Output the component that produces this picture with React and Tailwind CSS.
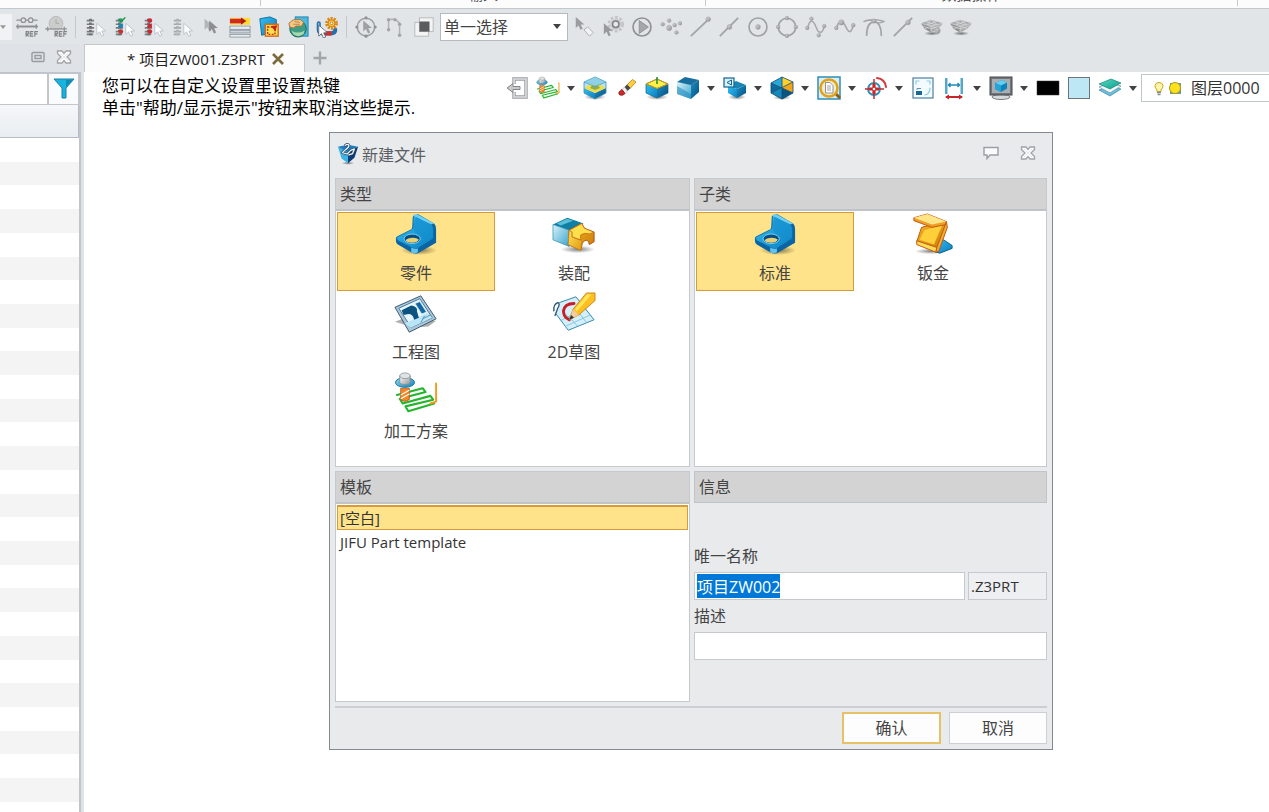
import React, { useEffect, useRef } from "react";

const stroke = { fill: "none", strokeLinecap: "round", strokeLinejoin: "round" };

function Svg({ children, size = "size-[22px]", box = 24 }) {
  return (
    <svg viewBox={`0 0 ${box} ${box}`} className={`${size} shrink-0`} aria-hidden="true">
      {children}
    </svg>
  );
}

function Gradients() {
  const defs = [
    ["blueDeep", "#1c8fc4", "#064f80"],
    ["blueBright", "#35bdf2", "#0a7fc0"],
    ["bluePale", "#d8f3fb", "#3aa3cc"],
    ["gold", "#ffe35a", "#e09a10"],
    ["goldDark", "#f7b727", "#c77a08"],
    ["greyBall", "#dcdcdc", "#8e8e8e"],
    ["steel", "#ffffff", "#909498"],
    ["teal", "#52dcc2", "#159a8c"],
    ["bolt", "#8fdcf2", "#0787bd"],
  ];
  return (
    <svg className="absolute size-0" aria-hidden="true">
      <defs>
        {defs.map(([id, a, b]) => (
          <linearGradient key={id} id={id} x1="0" y1="0" x2="1" y2="1">
            <stop offset="0" stopColor={a} />
            <stop offset="1" stopColor={b} />
          </linearGradient>
        ))}
        <radialGradient id="shade">
          <stop offset="0" stopColor="#000" stopOpacity="0.5" />
          <stop offset="1" stopColor="#000" stopOpacity="0" />
        </radialGradient>
      </defs>
    </svg>
  );
}

const Cursor = ({ x = 0, y = 0, fill = "#9a9a9a", line = "none" }) => (
  <path
    transform={`translate(${x} ${y})`}
    d="M0 0L0 12L3 9.3L5.2 14L7.6 13L5.4 8.4L9.4 8.2Z"
    fill={fill}
    stroke={line}
    strokeWidth="0.8"
  />
);

const g = "#8d8f91";

/* ---- selection toolbar icons ---- */
const RefMark = () => (
  <path d="M11 22v-5h2.500v2.500h-2.500l2.500 2.500M18.500 17h-3v5h3M15.500 19.500h2.500M20.500 22v-5h3M20.500 19.500h2.500" {...stroke} stroke="#7f8183" strokeWidth="1.200" />
);
const ChainRef = () => (
  <Svg>
    <g {...stroke} stroke={g} strokeWidth="1.3">
      <circle cx="8" cy="4.500" r="2.5" /><circle cx="16" cy="4.500" r="2.5" />
      <path d="M1 4.500h4M11 4.500h2M19 4.500h4" /><path d="M1 11.500h22" strokeWidth="2.2" /><path d="M2 9.500v4M22 9.500v4" />
    </g>
    <RefMark />
  </Svg>
);
const DialRef = () => (
  <Svg>
    <circle cx="12" cy="8" r="7.500" fill="#cbcccc" stroke="#b6b8b9" />
    <g {...stroke} stroke={g} strokeWidth="1.3">
      <path d="M12 4v4h3" stroke="#b0b0b0" /><path d="M1 14h22" strokeWidth="2" stroke="#a2a4a6" />
      <path d="M3 12v4M21 12v4" />
    </g>
    <RefMark />
  </Svg>
);
const PickList = ({ dots, tick, pale }) => (
  <Svg>
    <g stroke={pale ? "#a4a6a8" : "#7a7c7f"} strokeWidth="1.800">
      <path d="M3 5h8M3 9h8M3 13h8M3 17h8M3 20h7" />
    </g>
    <path d="M7 3v18" stroke={pale ? "#b0b2b4" : "#6c7074"} strokeWidth="3" strokeDasharray="2.500 1.500" />
    {dots.map((c, i) => <circle key={i} cx="8.500" cy={5 + i * 6} r="2.600" fill={c} />)}
    {tick && <path d="M7 4l2 2l4-4" {...stroke} stroke="#1f9a3c" strokeWidth="1.500" />}
    <Cursor x={14} y={8} fill="#fff" line="#a9b6c2" />
  </Svg>
);
const DoubleCursor = () => (<Svg><Cursor x={5} y={3} fill="#b3b5b6" /><Cursor x={10} y={5} fill="#8c8e90" /></Svg>);
const RedBars = () => (
  <Svg>
    <g stroke="#7e8a94" strokeWidth="0.800">
      <rect x="1" y="11" width="22" height="3.500" fill="#e9edf0" />
      <rect x="1" y="15.500" width="22" height="3" fill="#cfd6db" />
      <rect x="1" y="20" width="22" height="3" fill="#e9edf0" />
    </g>
    <rect x="1" y="2" width="22" height="7.500" fill="#ffd83a" />
    <rect x="1" y="3" width="14" height="5" fill="#d02a25" />
    <path d="M13 1.500L19 5.500L13 9.500Z" fill="#b51713" />
  </Svg>
);
const WindowPick = () => (
  <Svg>
    <path d="M2 3L13 1L20 4V17L4 21Z" fill="url(#blueBright)" stroke="#0c6a96" />
    <rect x="8" y="9" width="14" height="13" fill="#ffe14a" stroke="#d66a12" strokeWidth="1.500" />
    <rect x="10.500" y="12" width="8" height="8" fill="none" stroke="#c8201b" strokeWidth="1.500" strokeDasharray="2 1.500" />
    <path d="M14 11l7-1l-2 7z" fill="#c8201b" />
  </Svg>
);
const GlobeHand = () => (
  <Svg>
    <rect x="9" y="1" width="14" height="21" fill="#4cb8de" stroke="#1b83ae" />
    <circle cx="12" cy="14" r="9" fill="#3f9d86" stroke="#226856" />
    <path d="M5 16q6 4 14 0l-1 4q-6 4-11 0z" fill="#a8d8b0" />
    <path d="M2 8l5-4l8 0l3 3l-2 4l-6 0l-3 2l-4-1z" fill="#f2c88a" stroke="#b1702c" />
    <path d="M8 6l6 1M7 9l7 0" stroke="#b1702c" strokeWidth="0.800" />
  </Svg>
);
const PipeGear = () => (
  <Svg>
    <path d="M3 8v7q0 4 5 4h8q5 0 5-4" {...stroke} stroke="#2870ad" strokeWidth="4.500" />
    <path d="M9 19h8" stroke="#d0302a" strokeWidth="4.500" />
    <path d="M3 8v7q0 3 4 3" {...stroke} stroke="#8cc6ea" strokeWidth="1.300" />
    <circle cx="17" cy="8" r="5.500" fill="none" stroke="#d98512" strokeWidth="3" strokeDasharray="2.200 1.250" />
    <circle cx="17" cy="8" r="3.700" fill="#ffd24a" stroke="#d98512" strokeWidth="1.300" />
    <circle cx="17" cy="8" r="1.500" fill="#fff" stroke="#a45d07" strokeWidth="0.800" />
    <Cursor x={3} y={10} fill="#fff" line="#456" />
  </Svg>
);
const CirclePick = () => (
  <Svg>
    <circle cx="12" cy="12" r="9.500" fill="none" stroke="#9b9d9f" strokeWidth="1.600" />
    {[[12, 2], [12, 22], [2, 12], [22, 12]].map(([x, y]) => <circle key={`${x}-${y}`} cx={x} cy={y} r="1.700" fill="#8f9193" />)}
    <Cursor x={9} y={5} fill="#9d9fa0" />
  </Svg>
);
const Arch = () => (
  <Svg>
    <path d="M5 15V4q8-2 12 4V21" {...stroke} stroke="#b0b2b4" strokeWidth="1.600" />
    {[[5, 4], [5, 15], [12, 4], [17, 9], [17, 21]].map(([x, y]) => <circle key={`${x}-${y}`} cx={x} cy={y} r="1.900" fill="#a3a5a7" />)}
  </Svg>
);
const Squares = () => (
  <Svg>
    <rect x="2" y="7" width="15" height="15" fill="#f4f4f4" stroke="#b5b7b8" />
    <rect x="7" y="2" width="15" height="15" fill="#f4f4f4" stroke="#b5b7b8" />
    <rect x="7" y="6" width="11" height="11" fill="#5a5c5e" />
  </Svg>
);
const CursorTag = () => (
  <Svg><Cursor x={3} y={1} fill="#9a9c9d" /><path d="M12 15l4-3l6 6l-4 4z" fill="#f3f3f3" stroke="#a9abad" /></Svg>
);
const CursorGear = () => (
  <Svg>
    <circle cx="15" cy="9" r="7.500" fill="none" stroke="#c3c5c6" strokeWidth="3" strokeDasharray="3 1.900" />
    <circle cx="15" cy="9" r="6" fill="#c9cbcc" /><circle cx="15" cy="9" r="3.500" fill="#e5e7e9" stroke="#7e8082" strokeWidth="1.600" />
    <Cursor x={2} y={8} fill="#98999b" />
  </Svg>
);
const PlayRing = () => (
  <Svg><circle cx="12" cy="12" r="9.800" fill="none" stroke="#8e9092" strokeWidth="1.800" /><path d="M9 5v14l10-7z" fill="#a4a6a8" stroke="#8e9092" /></Svg>
);
const Ball = ({ x, y, r = 2 }) => <circle cx={x} cy={y} r={r} fill="url(#greyBall)" stroke="#8f9193" strokeWidth="0.500" />;
const Dots = () => (<Svg><Ball x={3} y={9} /><Ball x={10} y={5} /><Ball x={10} y={13} r={2.8} /><Ball x={16} y={10} /><Ball x={22} y={8} /><Ball x={18} y={18} /></Svg>);
const LineEnd = () => (<Svg><path d="M2 22L21 4" stroke="#a2a4a6" strokeWidth="2" /><Ball x={21} y={3.5} r={2.500} /></Svg>);
const LineMid = () => (<Svg><path d="M2 22L22 2" stroke="#a2a4a6" strokeWidth="2" /><Ball x={12.500} y={12} r={2.600} /></Svg>);
const LineNear = () => (<Svg><path d="M2 22L22 2" stroke="#a2a4a6" strokeWidth="2" /><Ball x={17.500} y={7} r={2.600} /></Svg>);
const RingDot = () => (<Svg><circle cx="12" cy="12" r="9.800" fill="none" stroke="#9fa1a3" strokeWidth="1.800" /><Ball x={12} y={12} r={2.600} /></Svg>);
const RingFour = () => (<Svg><circle cx="12" cy="12" r="9.500" fill="none" stroke="#9fa1a3" strokeWidth="1.800" /><Ball x={12} y={2.300} /><Ball x={12} y={21.700} /><Ball x={2.300} y={12} /><Ball x={21.700} y={12} /></Svg>);
const WaveA = () => (<Svg><path d="M3 13C5 3 9 4 12 12S19 20 21 11" {...stroke} stroke="#a6a8aa" strokeWidth="1.700" /><Ball x={2.500} y={13} /><Ball x={7} y={3} /><Ball x={15} y={21} /><Ball x={21} y={11} /></Svg>);
const WaveB = () => (<Svg><path d="M3 13C5 4 10 5 13 12S19 19 21 10" {...stroke} stroke="#a6a8aa" strokeWidth="1.900" /><Ball x={2.500} y={13} /><Ball x={8} y={7} r={2.800} /><Ball x={21} y={10} /></Svg>);
const Tangent = () => (
  <Svg>
    <g {...stroke} stroke="#a2a4a6" strokeWidth="1.900">
      <path d="M4 21C4 12 7 7 12 6.500S20 12 20 21" />
      <path d="M1 6Q6 3 12 6Q18 9 23 6M1 6Q12 2 23 6" strokeWidth="1.500" />
    </g>
    <Ball x={12} y={5.500} r={2.300} />
  </Svg>
);
const Facet = ({ dot }) => (
  <Svg>
    <ellipse cx="12" cy="19" rx="9" ry="2.500" fill="url(#shade)" />
    <path d="M0 8L11 4L24 8L19 14L11 18L4 14Z" fill="#a9abad" />
    <path d="M0 8L11 11L11 18L4 14Z" fill="#8f9193" />
    <path d="M0 8L11 11L24 8M11 4L7 9M11 4L18 9.500M5 6L17 10M17 6L6 10M4 14L11 11L19 14M11 11V18M2 11L11 14L21 11" stroke="#dfe1e2" strokeWidth="0.700" fill="none" />
    {dot && <Ball x={18} y={16} r={3} />}
  </Svg>
);

/* ---- view toolbar icons ---- */
const view = "size-6";
const Exit = () => (
  <Svg size={view}>
    <path d="M9 8V3H21V21H9V16" fill="none" stroke="#9a9c9e" strokeWidth="3.400" />
    <path d="M9 8V3H21V21H9V16" fill="none" stroke="#dcdddf" strokeWidth="1.600" />
    <path d="M2 12L8 7.500V10.500H15V13.500H8V16.500Z" fill="#c9cacc" stroke="#858789" />
  </Svg>
);
function MachiningShape() {
  return (
    <g>
      <path d="M3 25L30 18L33 22L6 29L9 34L38 26L41 30L12 37L15 42L42 34" {...stroke} stroke="#24b52c" strokeWidth="2.200" />
      <path d="M44 13V32L38 34" {...stroke} stroke="#f29a1d" strokeWidth="2" />
      <path d="M7 18h9v12l-5 2l-4-2z" fill="#f08728" stroke="#b04d0b" strokeWidth="0.800" />
      <path d="M7 25l9-5M7 29l9-5" stroke="#fff" strokeWidth="1.200" />
      <ellipse cx="11.500" cy="12" rx="10" ry="5" fill="url(#bolt)" stroke="#0f719d" />
      <path d="M6 5v8q5 3 11 0V5z" fill="url(#steel)" stroke="#7e868c" strokeWidth="0.800" />
      <ellipse cx="11.500" cy="5" rx="5.500" ry="3" fill="#dfe3e6" stroke="#858c92" strokeWidth="0.800" />
    </g>
  );
}
const Machining = () => <Svg size={view} box={46}><MachiningShape /></Svg>;
const Cube = ({ top = "url(#bluePale)", left = "url(#blueBright)", right = "url(#blueDeep)", children }) => (
  <Svg size={view}>
    <ellipse cx="12" cy="21" rx="11" ry="3" fill="url(#shade)" />
    <path d="M1 8L12 12.500V22L1 17Z" fill={left} />
    <path d="M23 8L12 12.500V22L23 17Z" fill={right} />
    <path d="M1 8L12 3L23 8L12 12.500Z" fill={top} />
    <path d="M1 8L12 3L23 8V17L12 22L1 17ZM1 8L12 12.500L23 8" fill="none" stroke="#0b5f8a" strokeWidth="0.700" />
    {children}
  </Svg>
);
const CubeSection = () => (
  <Svg size={view}>
    <ellipse cx="12" cy="21" rx="11" ry="3" fill="url(#shade)" />
    <path d="M1 6L12 1L23 6V17L12 23L1 17Z" fill="#b9e4f3" />
    <path d="M1 12L12 17V23L1 17Z" fill="url(#blueBright)" /><path d="M23 12L12 17V23L23 17Z" fill="url(#blueDeep)" />
    <path d="M1 12L8 8L16 8L23 12L12 17Z" fill="#f1dd4c" />
    <path d="M7 12L9 9.500H15L17 12L12 14Z" fill="#8cae4e" />
    <path d="M1 6L12 10.500L23 6M1 6L12 1L23 6V17L12 23L1 17Z" fill="none" stroke="#3b8fb0" strokeWidth="0.800" />
    <path d="M1 6L12 1L23 6L12 10.500Z" fill="#79c9e2" opacity="0.700" />
  </Svg>
);
const Eraser = () => (
  <Svg size={view}>
    <path d="M13 9L18.500 3.500L22 6L16 12.500Z" fill="#ffcf3f" stroke="#b57c12" strokeWidth="0.800" />
    <path d="M10.500 11L13 8.500L16.500 12L13.500 15Z" fill="#4a4a4a" />
    <path d="M8 13.500L10.500 11L13.500 15L11 17.500Z" fill="#f2f2f2" stroke="#999" strokeWidth="0.500" />
    <path d="M5 16L8 13.500L11 17.500L9 19Q4 20 5 16Z" fill="#cf2a28" stroke="#8a1512" strokeWidth="0.800" />
  </Svg>
);
const CubeTop = () => (<Cube top="#fff04a"><path d="M1 8L12 3L23 8L12 12.500Z" fill="none" stroke="#d49a0c" /><path d="M12 1V8" stroke="#1a8a35" strokeWidth="1.500" /></Cube>);
const CubeBlue = () => (
  <Svg size={view}>
    <path d="M2 7L8 2H22V16L15 22L2 21Z" fill="url(#shade)" />
    <path d="M1 6L15 9V23L1 18Z" fill="url(#bluePale)" /><path d="M15 9L23 4V16L15 23Z" fill="url(#blueDeep)" />
    <path d="M1 6L9 1L23 4L15 9Z" fill="#176f9f" /><path d="M1 10L15 18V23L1 18Z" fill="#268fc0" opacity="0.600" />
  </Svg>
);
const CubeView = () => (
  <Svg size={view}>
    <ellipse cx="14" cy="21" rx="9" ry="3" fill="url(#shade)" />
    <path d="M5 10L14 13V22L5 17Z" fill="url(#blueBright)" /><path d="M14 13L23 9V17L14 22Z" fill="url(#blueDeep)" />
    <path d="M5 10L13 5L23 9L14 13Z" fill="#1a86b3" />
    <rect x="1" y="2" width="10" height="9" fill="#d9f1fa" stroke="#0e6591" strokeWidth="1.200" />
    <path d="M8.500 4V9L4 6.500Z" fill="none" stroke="#0e6591" />
  </Svg>
);
const Hexa = () => (
  <Svg size={view}>
    <ellipse cx="12" cy="21.500" rx="9" ry="2.500" fill="url(#shade)" />
    <path d="M12 1L1 7L12 12Z" fill="#2aa7d8" /><path d="M12 1L23 6L12 12Z" fill="#ffcf2e" />
    <path d="M23 6V17L12 12Z" fill="#f2a516" /><path d="M1 7V17L12 12Z" fill="#0d6b9c" />
    <path d="M1 17L12 23V12Z" fill="#1788bb" /><path d="M23 17L12 23V12Z" fill="#0a5480" />
    <path d="M12 1L1 7V17L12 23L23 17V6ZM12 1V23M1 7L23 17M23 6L1 17" fill="none" stroke="#0a4a70" strokeWidth="0.800" />
  </Svg>
);
const ZoomPage = () => (
  <Svg size={view}>
    <rect x="1" y="1" width="22" height="22" fill="#d9eff8" stroke="#2f8db6" strokeWidth="1.500" />
    <path d="M18 17L23 22" stroke="#8a5c14" strokeWidth="3" />
    <circle cx="12" cy="12" r="8.500" fill="#f3ecc9" stroke="#dfa11b" strokeWidth="2.500" />
    <path d="M8.500 6.500H13L16 9.500V17H8.500Z" fill="#fff" stroke="#8c949a" /><path d="M10 10h4M10 12h4M10 14h4" stroke="#9aa1a6" />
  </Svg>
);
const Target = () => (
  <Svg size={view}>
    <circle cx="10" cy="13" r="6" fill="none" stroke="#2c8fb5" strokeWidth="1.800" />
    <path d="M10 3V23M1 13H20" stroke="#c9272b" strokeWidth="1.500" />
    <path d="M10 8V18M5 13H15" stroke="#c9272b" strokeWidth="3.200" /><circle cx="10" cy="13" r="1.300" fill="#fff" />
    <path d="M13 2Q21 3 22 11" {...stroke} stroke="#d2393b" strokeWidth="2" />
  </Svg>
);
const FitBox = () => (
  <Svg size={view}>
    <rect x="2" y="2" width="20" height="20" fill="#f4fbfe" stroke="#5b89a3" strokeWidth="1.300" />
    <path d="M5 8V5H8M16 5H19V8M19 12Q19 18 14 19" {...stroke} stroke="#8accE3" strokeWidth="1.200" />
    <rect x="5" y="15" width="6" height="4" fill="#1a6793" /><path d="M6 14v-1.500h4" fill="none" stroke="#5a93b0" />
  </Svg>
);
const Dimension = () => (
  <Svg size={view}>
    <rect x="3" y="2" width="2.500" height="16" fill="#56a7c9" /><rect x="18.500" y="2" width="2.500" height="16" fill="#56a7c9" />
    <path d="M6 9H18M8.500 7L6.500 9L8.500 11M15.500 7L17.500 9L15.500 11" fill="none" stroke="#2187b2" strokeWidth="1.400" />
    <path d="M4 21H20" stroke="#c4262a" strokeWidth="2" /><path d="M7 18.500L3 21L7 23.500ZM17 18.500L21 21L17 23.500Z" fill="#c4262a" />
  </Svg>
);
const Monitor = () => (
  <Svg size={view}>
    <ellipse cx="12" cy="21" rx="9" ry="2.500" fill="#d7d9db" stroke="#777b80" />
    <rect x="1" y="1" width="22" height="18" fill="#72777d" stroke="#45494d" /><rect x="3" y="3" width="18" height="14" fill="#a9adb2" />
    <path d="M6 7L13 4L18 6.500V12.500L12 16L6 13Z" fill="#0c84bb" /><path d="M6 7L13 4L18 6.500L12 9.500Z" fill="#67cdee" /><path d="M12 9.500V16L6 13V7Z" fill="#24a5d8" />
  </Svg>
);
const BlackSwatch = () => (<Svg size={view}><rect x="1" y="5" width="22" height="14" fill="#000" stroke="#3a3a3a" strokeWidth="0.500" /></Svg>);
const BlueSwatch = () => (<Svg size={view}><rect x="1.500" y="1.500" width="21" height="21" fill="#bee7f6" stroke="#6c767b" /></Svg>);
const LayersIcon = () => (
  <Svg size={view}>
    <path d="M1 14L12 10L23 13L12 20Z" fill="#69bfdf" stroke="#3b87a5" strokeWidth="0.700" />
    <path d="M1 11L12 7L23 10L12 17Z" fill="#f3f8fa" stroke="#6d8e9b" strokeWidth="0.700" />
    <path d="M1 8L13 3L23 7L12 13Z" fill="url(#teal)" stroke="#14857b" strokeWidth="0.700" />
  </Svg>
);
const Bulb = () => (
  <Svg size="size-4" box={16}>
    <path d="M6 10Q4 8 4 5.500Q4.500 2.500 8 2.500T12 5.500Q12 8 10 10V11.500H6Z" fill="#fff6a8" stroke="#c9a325" />
    <path d="M6 12.500h4M6.500 14.500h3" stroke="#8b8f94" strokeWidth="1.300" />
  </Svg>
);
const Sun = () => (<Svg size="size-4" box={16}><rect x="3" y="3" width="11" height="11" fill="#6c9b8f" /><circle cx="8" cy="8" r="5.500" fill="#ffe21c" stroke="#ab9a1b" /></Svg>);

/* ---- dialog icons ---- */
const big = "size-11";
const PartIcon = () => (
  <Svg size={big} box={46}>
    <ellipse cx="26" cy="39" rx="19" ry="5" fill="url(#shade)" />
    <path d="M20 3L25 1L42 11Q44 13 44 17V31L25 42Q21 43 18 41L4 33Q2 32 2 29V26L19 18Z" fill="#0b65a4" />
    <path d="M3 25L17 18Q20 17 20 13V4Q21 2 24 3L39 12Q42 14 41 19V27L25 37Q21 38 18 36L4 29Q2 27 3 25Z" fill="url(#blueBright)" stroke="#0a669f" strokeWidth="0.800" />
    <path d="M20 3Q20 1 24 1L42 11L39 12L22 4Z" fill="#6fd0f6" />
    <path d="M20 14Q21 22 31 25L41 26V18Q40 14 38 12L23 4Z" fill="#1590cf" opacity="0.700" />
    <path d="M18 36V41Q21 43 25 41V37Q21 38 18 36Z" fill="#62c4ed" />
    <ellipse cx="19" cy="27" rx="8.500" ry="5" fill="#064f80" stroke="#7ed4f5" />
    <path d="M12 29Q14 26 20 26Q24 26 26 28Q24 31 19 31Q14 31 12 29Z" fill="#e8cf78" />
  </Svg>
);
const AssemblyIcon = () => (
  <Svg size={big} box={46}>
    <ellipse cx="27" cy="38" rx="18" ry="4" fill="url(#shade)" />
    <path d="M1 12L16 5L33 11L18 18Z" fill="#0f7fa6" /><path d="M5 11L16 6L22 8L9 13Z" fill="#5bbfd9" />
    <path d="M1 12L18 18V35L1 28Z" fill="url(#bluePale)" stroke="#2685a8" strokeWidth="0.700" />
    <path d="M18 18L31 11L34 16L44 20V30L39 33Q38 27 34 29Q31 31 31 35L30 39L17 33Z" fill="url(#goldDark)" stroke="#b04d12" />
    <path d="M18 18L21 20V25L31 29L30 39L17 33Z" fill="url(#gold)" stroke="#d08812" strokeWidth="0.700" />
    <path d="M18 18L31 11L34 16L44 20L39 22Q34 20 30 23V28L21 25V20Z" fill="#ffe04c" stroke="#bd6417" strokeWidth="0.800" />
  </Svg>
);
const DrawingIcon = () => (
  <Svg size={big} box={46}>
    <path d="M1 31L9 28L44 30L36 36L20 37Z" fill="#8b8d8f" opacity="0.700" />
    <path d="M1 16L28 4L44 28L16 42Z" fill="#acc6d9" stroke="#33566f" />
    <path d="M5 17L27 7L40 27L18 37Z" fill="#e8f7fd" stroke="#4a7796" />
    <path d="M11 33L28 25L35 22L40 27L18 37Z" fill="#b9e6f7" />
    <path d="M8 19L18 14Q25 15 24 20L26 27L21 29Q20 23 15 23L10 24Z" fill="#0c547f" />
    <path d="M22 12L27 10L34 21L29 23Z" fill="#1467a1" stroke="#cfeaf6" strokeWidth="0.900" />
    <path d="M28 32L32 25M30 28L38 24" stroke="#5c91b0" />
  </Svg>
);
const SketchIcon = () => (
  <Svg size={big} box={46}>
    <path d="M2 20Q3 12 8 11L25 5L44 29L17 40Z" fill="#d5effa" stroke="#3283a8" />
    <path d="M9 30L34 17M14 36L40 24M17 25L27 36M27 20L36 32M10 18L20 30" stroke="#7dc1dd" strokeWidth="0.900" />
    <path d="M2 20Q1 13 6 11Q9 12 6 17L3 25" fill="#f7fbfd" stroke="#31597a" strokeWidth="1.400" />
    <path d="M23 12Q13 12 12 20Q12 26 18 29" {...stroke} stroke="#c91d25" strokeWidth="3" />
    <path d="M18 29L22 18L36 1H45V9L28 24Z" fill="#ffbf22" stroke="#c17108" strokeWidth="0.800" />
    <path d="M24 18L37 2L41 3L26 20Z" fill="#ffe75b" />
    <path d="M18 29L22 18L28 24Z" fill="#f1cda0" /><path d="M18 29L20 24L23 27Z" fill="#2f3033" />
  </Svg>
);
const SchemeIcon = () => <Svg size={big} box={46}><MachiningShape /></Svg>;
const SheetIcon = () => (
  <Svg size={big} box={46}>
    <ellipse cx="21" cy="40" rx="17" ry="3" fill="url(#shade)" />
    <path d="M24 35L34 28L43 34V37L30 42L24 40Z" fill="url(#blueBright)" stroke="#0b638e" />
    <path d="M11 15L35 9L37 12L28 37L6 30Z" fill="url(#goldDark)" stroke="#c25412" />
    <path d="M14 18L33 12L24 33L9 28Z" fill="#ffcf3a" />
    <path d="M3 5L17 1L37 9V12L22 15L3 8Z" fill="#ef9f26" stroke="#c25412" />
    <path d="M3 5L17 1L37 9L22 12Z" fill="#ffe488" />
    <path d="M6 29L27 36L26 41L6 33Z" fill="#ffdc55" stroke="#c25412" />
    <path d="M37 9L38 15L29 40L26 41L27 36Z" fill="#f0ad30" stroke="#c25412" />
  </Svg>
);
const DialogLogo = () => (
  <Svg>
    <ellipse cx="12" cy="22" rx="7" ry="1.800" fill="url(#shade)" />
    <path d="M1 4L12 9L12 22L5 17Z" fill="#3cb4e5" /><path d="M23 4L12 9V22L19 16Z" fill="#0a3c78" />
    <path d="M1 4L12 2L23 4L12 10Z" fill="#1d7fc4" />
    <path d="M9 2.500q3-2 4 0q0 3-4 5l-3 3l5 1.500l4-4l4-1.500l-2 5l-4 1.500" {...stroke} stroke="#27425d" strokeWidth="2.800" />
    <path d="M9 2.500q3-2 4 0q0 3-4 5l-3 3l5 1.500l4-4l4-1.500l-2 5l-4 1.500" {...stroke} stroke="#eef4f8" strokeWidth="1.400" />
  </Svg>
);
const OutlineX = () => (
  <Svg size="size-4" box={16}>
    <path d="M1.500 2H6L8 4.500L10 2H14.500V4.500L11 8L14.500 11.500V14H10L8 11.500L6 14H1.500V11.500L5 8L1.500 4.500Z" fill="#fcfcfd" stroke="#a0a3a7" strokeWidth="1.300" />
    <path d="M4 4L12 12M12 4L4 12" stroke="#a0a3a7" strokeWidth="0.600" opacity="0.400" />
  </Svg>
);

const Caret = () => (
  <span className="flex w-4 shrink-0 justify-center">
    <svg viewBox="0 0 8 5" className="h-[5px] w-2" aria-hidden="true"><path d="M0 0H8L4 5Z" fill="#404244" /></svg>
  </span>
);
const Separator = () => <span className="flex w-[10px] shrink-0 justify-center"><span className="h-[22px] w-px bg-[#c4c8cc]" /></span>;

function ToolButton({ label, children, view: isView }) {
  return (
    <button type="button" aria-label={label} className={`flex shrink-0 items-center justify-center ${isView ? "w-[31px]" : "w-[29px]"}`}>
      {children}
    </button>
  );
}

const pickGroup = [
  ["过滤列表", <PickList dots={[]} />],
  ["勾选列表", <PickList dots={["#2a9d8f", "#1c86b5", "#c9302c"]} tick />],
  ["全部移除", <PickList dots={["#c92a35", "#c92a35", "#c92a35"]} />],
  ["清空列表", <PickList dots={[]} pale />],
  ["多重选取", <DoubleCursor />],
  ["属性过滤", <RedBars />],
  ["窗选", <WindowPick />],
  ["实体选取", <GlobeHand />],
  ["选取设置", <PipeGear />],
];
const modeGroup = [["圆形选取", <CirclePick />], ["链选", <Arch />], ["框选", <Squares />]];
const snapGroup = [
  ["标记选取", <CursorTag />], ["选取选项", <CursorGear />], ["播放", <PlayRing />], ["点", <Dots />],
  ["端点", <LineEnd />], ["中点", <LineMid />], ["圆心", <RingDot />], ["象限点", <RingFour />],
  ["曲线点", <WaveA />], ["曲线顶点", <WaveB />], ["相切", <Tangent />], ["最近点", <LineNear />],
  ["面上点", <Facet dot />], ["面", <Facet />],
];
const viewTools = [
  ["退出", <Exit />], ["加工", <Machining />, 1], ["剖面", <CubeSection />], ["擦除", <Eraser />], ["顶面", <CubeTop />],
  ["着色", <CubeBlue />, 1], ["视图", <CubeView />, 1], ["等轴测", <Hexa />, 1], ["缩放", <ZoomPage />, 1], ["定位", <Target />, 1],
  ["适合窗口", <FitBox />], ["尺寸", <Dimension />, 1], ["显示", <Monitor />, 1], ["前景色", <BlackSwatch />],
  ["背景色", <BlueSwatch />], ["图层", <LayersIcon />, 1],
];

function Ribbon() {
  const group = "flex h-[6px] flex-col items-center justify-end overflow-hidden border-r border-[#c6cacf] pb-1 text-[15px] leading-4 text-[#555]";
  return (
    <div className="flex h-2 shrink-0 overflow-hidden bg-[#fcfcfd]">
      <div className={`${group} w-[261px]`} />
      <div className={`${group} w-[445px]`}><span>输入</span></div>
      <div className={`${group} w-[532px]`}><span>数据操作</span></div>
    </div>
  );
}

function SelectionToolbar() {
  return (
    <div className="flex h-9 shrink-0 items-center border-t border-[#c3c8cd] bg-[#e1e5e8]">
      <div className="flex h-[26px] w-3 items-center justify-start bg-[#f0f2f3]">
        <svg viewBox="0 0 8 5" className="h-1 w-[6px]" aria-hidden="true"><path d="M0 0H8L4 5Z" fill="#999" /></svg>
      </div>
      <ToolButton label="链参考"><ChainRef /></ToolButton>
      <ToolButton label="刻度参考"><DialRef /></ToolButton>
      <Separator />
      {pickGroup.map(([l, icon]) => <ToolButton key={l} label={l}>{icon}</ToolButton>)}
      <Separator />
      {modeGroup.map(([l, icon]) => <ToolButton key={l} label={l}>{icon}</ToolButton>)}
      <div className="relative ml-[2px] mr-px flex h-7 w-32 shrink-0 items-center border border-[#b4bac0] bg-white">
        <select aria-label="选择方式" className="size-full appearance-none bg-transparent pl-[3px] text-[#444]">
          <option>单一选择</option>
        </select>
        <span className="pointer-events-none absolute right-[2px]"><Caret /></span>
      </div>
      {snapGroup.map(([l, icon]) => <ToolButton key={l} label={l}>{icon}</ToolButton>)}
    </div>
  );
}

function SidePanel() {
  return (
    <aside className="flex w-[84px] shrink-0 flex-col bg-[#dfe3e7]">
      <div className="flex h-7 shrink-0 items-center justify-end gap-[11px] pb-[2px] pr-3">
        <button type="button" aria-label="还原">
          <svg viewBox="0 0 14 12" className="h-3 w-[14px]" fill="none" stroke="#989ca0" strokeWidth="1.4" aria-hidden="true">
            <rect x="1" y="1.500" width="12" height="9" rx="1" /><rect x="4" y="4.500" width="6" height="3" />
          </svg>
        </button>
        <button type="button" aria-label="关闭面板"><OutlineX /></button>
      </div>
      <div className="mr-[3px] flex min-h-0 flex-1 flex-col border-r-2 border-t border-[#bfc5cb] bg-white">
        <div className="flex h-8 shrink-0">
          <input aria-label="搜索" className="min-w-0 flex-1 border-b border-t border-[#c0c6cc] bg-white outline-none" />
          <button type="button" aria-label="筛选" className="flex w-8 items-center justify-center border border-l-2 border-[#c0c6cc] bg-[#fafbfc]">
            <svg viewBox="0 0 22 22" className="size-[22px]" aria-hidden="true">
              <path d="M1 1H21L13 10V20H9V10Z" fill="#16b4df" stroke="#2580a0" />
              <path d="M13 2H20L13 9Z" fill="#0d90b8" />
            </svg>
          </button>
        </div>
        <div className="h-[33px] shrink-0 border-b border-r border-[#b4bbc2] bg-gradient-to-b from-[#f5f7f9] to-[#e9edf1]" />
        <div className="min-h-0 flex-1 overflow-hidden">
          <div className="grid h-[102%] auto-rows-fr">
            {Array.from({ length: 29 }, (_, i) => <div key={i} className="even:bg-[#f4f4f4]" />)}
          </div>
        </div>
      </div>
    </aside>
  );
}

function TabBar() {
  return (
    <div className="flex h-7 shrink-0 items-stretch bg-[#e1e5e8]">
      <div className="flex w-[221px] items-center justify-end gap-[7px] border border-b-0 border-[#c3c8cd] bg-[#fcfcfd] pr-5 text-[15px] text-[#222]">
        <a href="#file" className="whitespace-nowrap">* 项目ZW001.Z3PRT</a>
        <button type="button" aria-label="关闭标签">
          <svg viewBox="0 0 12 12" className="size-3" aria-hidden="true"><path d="M1 1L11 11M11 1L1 11" stroke="#7d6a3c" strokeWidth="2.600" /></svg>
        </button>
      </div>
      <button type="button" aria-label="新建标签" className="flex w-[30px] items-center justify-center">
        <svg viewBox="0 0 14 14" className="size-[14px]" aria-hidden="true"><path d="M7 0.500V13.500M0.500 7H13.500" stroke="#a3a6a9" strokeWidth="2.400" /></svg>
      </button>
    </div>
  );
}

function ViewBar() {
  return (
    <div className="flex items-start justify-between">
      <p className="shrink-0 whitespace-nowrap pl-[18px] pt-[3px] text-[17px] leading-[22px] text-black">
        您可以在自定义设置里设置热键<br />单击"帮助/显示提示"按钮来取消这些提示.
      </p>
      <div className="flex items-center pt-[2px]">
        {viewTools.map(([l, icon, menu]) => (
          <React.Fragment key={l}>
            <ToolButton label={l} view>{icon}</ToolButton>
            {menu && <Caret />}
          </React.Fragment>
        ))}
        <button type="button" className="flex h-7 w-32 items-center border border-r-0 border-[#c0c5ca] bg-white pl-[9px] text-[#333]">
          <Bulb /><Sun /><span className="ml-2 whitespace-nowrap">图层0000</span>
        </button>
      </div>
    </div>
  );
}

const GroupHead = ({ children, framed }) => (
  <h2 className={`flex h-8 shrink-0 items-center border-[#c0c3c8] bg-[#d3d3d3] pl-1 ${framed ? "border" : "border-b-2"}`}>{children}</h2>
);

function Tile({ label, icon, active }) {
  return (
    <button
      type="button"
      aria-pressed={!!active}
      className={`flex h-[79px] flex-col items-center border leading-6 ${active ? "border-[#d99a3a] bg-[#ffe38a]" : "border-transparent"}`}
    >
      {icon}
      <span className="mt-1">{label}</span>
    </button>
  );
}

function TileGroup({ title, tiles }) {
  return (
    <section className="flex h-[289px] flex-col border border-[#c5c9ce] bg-white">
      <GroupHead>{title}</GroupHead>
      <div className="grid grid-cols-[158px_158px] content-start pl-px pt-px">
        {tiles.map((t) => <Tile key={t.label} {...t} />)}
      </div>
    </section>
  );
}

function NewFileDialog() {
  const nameRef = useRef(null);
  useEffect(() => {
    nameRef.current.focus();
    nameRef.current.select();
  }, []);
  const field = "h-7 min-w-0 border border-[#c6cacf] pl-[2px] outline-none";
  return (
    <form
      role="dialog"
      aria-labelledby="dlg-title"
      onSubmit={(e) => e.preventDefault()}
      className="absolute left-[245px] top-[88px] flex w-[724px] flex-col border border-[#838a93] bg-[#e8eaec] px-[5px] pb-[5px] text-[#444]"
    >
      <header className="flex h-[45px] items-start pl-[2px] pt-[10px]">
        <DialogLogo />
        <h1 id="dlg-title" className="ml-[3px] leading-6 text-[#5c5f63]">新建文件</h1>
        <div className="ml-auto flex items-center gap-5 pr-[11px] pt-[2px]">
          <button type="button" aria-label="反馈">
            <svg viewBox="0 0 18 14" className="h-[14px] w-[18px]" aria-hidden="true">
              <path d="M2 1.500H16V9H8L5 12.500V9H2Z" fill="#fbfbfc" stroke="#9b9ea2" strokeWidth="1.400" />
            </svg>
          </button>
          <button type="button" aria-label="关闭"><OutlineX /></button>
        </div>
      </header>

      <div className="grid grid-cols-[355px_1fr] gap-x-1 gap-y-1">
        <TileGroup
          title="类型"
          tiles={[
            { label: "零件", icon: <PartIcon />, active: true },
            { label: "装配", icon: <AssemblyIcon /> },
            { label: "工程图", icon: <DrawingIcon /> },
            { label: "2D草图", icon: <SketchIcon /> },
            { label: "加工方案", icon: <SchemeIcon /> },
          ]}
        />
        <TileGroup
          title="子类"
          tiles={[
            { label: "标准", icon: <PartIcon />, active: true },
            { label: "钣金", icon: <SheetIcon /> },
          ]}
        />
        <section className="flex h-[231px] flex-col border border-[#c5c9ce] bg-white">
          <GroupHead>模板</GroupHead>
          <ul className="p-px text-[15px] leading-6 text-[#333]">
            <li><button type="button" className="block w-full border border-t-2 border-[#d99a3a] bg-[#ffe38a] px-[2px] text-left leading-[22px]">[空白]</button></li>
            <li><button type="button" className="block w-full px-[3px] text-left">JIFU Part template</button></li>
          </ul>
        </section>
        <section className="flex flex-col">
          <GroupHead framed>信息</GroupHead>
          <div className="mt-[41px] grid grid-cols-[271px_1fr] gap-x-[3px]">
            <label htmlFor="file-name" className="col-span-2 mb-1 leading-6">唯一名称</label>
            <input
              id="file-name"
              ref={nameRef}
              defaultValue="项目ZW002"
              className={`${field} bg-white selection:bg-[#0078d7] selection:text-white`}
            />
            <input aria-label="扩展名" readOnly value=".Z3PRT" className={`${field} bg-[#eeeff0] text-[15px] text-[#333]`} />
            <label htmlFor="file-desc" className="col-span-2 my-1 leading-6">描述</label>
            <input id="file-desc" className={`${field} col-span-2 bg-white`} />
          </div>
        </section>
      </div>

      <footer className="mt-1 flex justify-end gap-2 border-t-2 border-[#cbced2] pt-1">
        <button type="submit" className="h-8 w-[99px] border-2 border-[#e6c167] bg-[#fdfdfd]">确认</button>
        <button type="button" className="h-8 w-[98px] border border-[#cdd1d5] bg-[#fdfdfd]">取消</button>
      </footer>
    </form>
  );
}

export default function App() {
  return (
    <div className="relative flex h-screen flex-col overflow-hidden bg-white font-['Open_Sans','Noto_Sans_CJK_SC',sans-serif] text-base leading-6">
      <Gradients />
      <Ribbon />
      <SelectionToolbar />
      <div className="flex min-h-0 flex-1">
        <SidePanel />
        <main className="relative flex min-w-0 flex-1 flex-col">
          <TabBar />
          <ViewBar />
          <NewFileDialog />
        </main>
      </div>
    </div>
  );
}
